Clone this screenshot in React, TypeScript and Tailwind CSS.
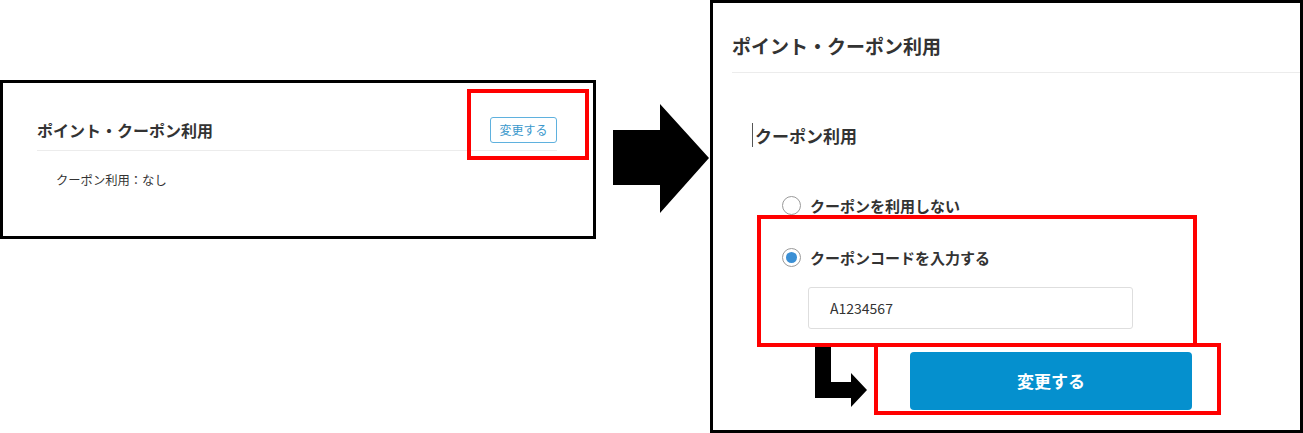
import React from "react";

const font = { fontFamily: '"Noto Sans CJK JP", "Noto Sans", sans-serif' };

function Radio({ checked }: { checked?: boolean }) {
  return (
    <span className="flex h-[19px] w-[19px] items-center justify-center rounded-full border border-[#9a9a9a] bg-white">
      {checked && <span className="h-[11px] w-[11px] rounded-full bg-[#3b8fd4]" />}
    </span>
  );
}

export default function App() {
  return (
    <div className="relative flex h-[433px] w-[1303px] items-start bg-white text-[#333]" style={font}>
      {/* Left panel: before */}
      <div className="mt-[80px] flex h-[159px] w-[596px] flex-col border-[3px] border-black bg-white pl-[34px] pr-[36px] pt-[34px]">
        <div className="flex h-[26px] items-center justify-between">
          <span className="text-[16px] font-bold leading-none text-[#333]">ポイント・クーポン利用</span>
          <button className="flex h-[26px] w-[67px] items-center justify-center rounded-[3px] border border-[#5fb1de] bg-white text-[12px] text-[#3a98cc]">
            変更する
          </button>
        </div>
        <div className="mt-[7px] h-px bg-[#ececec]" />
        <div className="mt-[19px] pl-[19px] text-[12.3px] leading-[20px] text-[#333]">クーポン利用：なし</div>
      </div>

      {/* Big arrow */}
      <svg className="ml-[17px] mt-[104px] shrink-0" width="97" height="110" viewBox="0 0 97 110">
        <polygon points="0,26 47,26 47,0 96,54 47,109 47,81 0,81" fill="#000" />
      </svg>

      {/* Right panel: after */}
      <div className="flex h-[433px] w-[593px] flex-col border-[3px] border-black bg-white pl-[19px] pt-[31px]">
        <div className="text-[19px] font-bold leading-[24px] text-[#333]">ポイント・クーポン利用</div>
        <div className="mt-[14px] h-px bg-[#ececec]" />

        <div className="ml-[20px] mt-[50px] flex h-[24px] items-center">
          <span className="h-[24px] w-px bg-[#555]" />
          <span className="ml-[2px] text-[17px] font-bold leading-none text-[#333]">クーポン利用</span>
        </div>

        <div className="ml-[50px] mt-[48px] flex h-[20px] items-center gap-[9px]">
          <Radio />
          <span className="text-[15px] font-bold leading-none text-[#333]">クーポンを利用しない</span>
        </div>

        <div className="ml-[50px] mt-[32px] flex h-[20px] items-center gap-[9px]">
          <Radio checked />
          <span className="text-[15px] font-bold leading-none text-[#333]">クーポンコードを入力する</span>
        </div>

        <div className="ml-[76px] mt-[20px] flex h-[42px] w-[325px] items-center rounded-[3px] border border-[#dedede] bg-white pl-[21px] text-[14px] text-[#333]">
          A1234567
        </div>

        <button className="ml-[178px] mt-[23px] flex h-[58px] w-[282px] items-center justify-center rounded-[4px] bg-[#0590ce] text-[17px] font-bold text-white">
          変更する
        </button>
      </div>

      {/* Annotation overlays */}
      <div className="pointer-events-none absolute left-[467px] top-[89px] h-[71px] w-[122px] border-4 border-[#ff0000]" />
      <div className="pointer-events-none absolute left-[757px] top-[215px] h-[132px] w-[440px] border-4 border-[#ff0000]" />
      <div className="pointer-events-none absolute left-[874px] top-[343px] h-[72px] w-[347px] border-4 border-[#ff0000]" />
      <svg className="pointer-events-none absolute left-[815px] top-[347px]" width="52" height="60" viewBox="0 0 52 60">
        <polygon points="0,0 16,0 16,35 36,35 36,26 52,43 36,60 36,51 0,51" fill="#000" />
      </svg>
    </div>
  );
}
